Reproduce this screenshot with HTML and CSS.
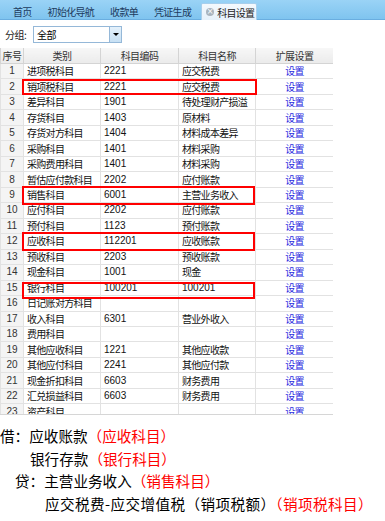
FILE: index.html
```html
<!DOCTYPE html>
<html lang="zh-CN">
<head>
    <meta charset="UTF-8">
    <meta name="viewport" content="width=device-width, initial-scale=1.0">
    <title>科目设置</title>
    <link rel="stylesheet" href="styles.css">
</head>
<body>
    <div class="page">
        <div class="tabs">
            <span class="tab t1">首页</span>
            <span class="tab t2">初始化导航</span>
            <span class="tab t3">收款单</span>
            <span class="tab t4">凭证生成</span>
            <span class="tab active"><i class="tab-close">&times;</i>科目设置</span>
        </div>

        <div class="filter">
            <label>分组:</label>
            <div class="combo">
                <span class="combo-text">全部</span>
                <span class="combo-btn"></span>
            </div>
        </div>

        <div class="grid">
            <table>
                <colgroup>
                    <col class="c-no"><col class="c-type"><col class="c-code"><col class="c-name"><col class="c-set">
                </colgroup>
                <thead>
                    <tr><th>序号</th><th>类别</th><th>科目编码</th><th>科目名称</th><th>扩展设置</th></tr>
                </thead>
                <tbody>
                    <tr><td class="no">1</td><td>进项税科目</td><td class="num">2221</td><td>应交税费</td><td class="set">设置</td></tr>
                    <tr><td class="no">2</td><td>销项税科目</td><td class="num">2221</td><td>应交税费</td><td class="set">设置</td></tr>
                    <tr><td class="no">3</td><td>差异科目</td><td class="num">1901</td><td>待处理财产损溢</td><td class="set">设置</td></tr>
                    <tr><td class="no">4</td><td>存货科目</td><td class="num">1403</td><td>原材料</td><td class="set">设置</td></tr>
                    <tr><td class="no">5</td><td>存货对方科目</td><td class="num">1404</td><td>材料成本差异</td><td class="set">设置</td></tr>
                    <tr><td class="no">6</td><td>采购科目</td><td class="num">1401</td><td>材料采购</td><td class="set">设置</td></tr>
                    <tr><td class="no">7</td><td>采购费用科目</td><td class="num">1401</td><td>材料采购</td><td class="set">设置</td></tr>
                    <tr><td class="no">8</td><td>暂估应付款科目</td><td class="num">2202</td><td>应付账款</td><td class="set">设置</td></tr>
                    <tr><td class="no">9</td><td>销售科目</td><td class="num">6001</td><td>主营业务收入</td><td class="set">设置</td></tr>
                    <tr><td class="no">10</td><td>应付科目</td><td class="num">2202</td><td>应付账款</td><td class="set">设置</td></tr>
                    <tr><td class="no">11</td><td>预付科目</td><td class="num">1123</td><td>预付账款</td><td class="set">设置</td></tr>
                    <tr><td class="no">12</td><td>应收科目</td><td class="num">112201</td><td>应收账款</td><td class="set">设置</td></tr>
                    <tr><td class="no">13</td><td>预收科目</td><td class="num">2203</td><td>预收账款</td><td class="set">设置</td></tr>
                    <tr><td class="no">14</td><td>现金科目</td><td class="num">1001</td><td>现金</td><td class="set">设置</td></tr>
                    <tr><td class="no">15</td><td>银行科目</td><td class="num">100201</td><td class="num">100201</td><td class="set">设置</td></tr>
                    <tr><td class="no">16</td><td>日记账对方科目</td><td></td><td></td><td class="set">设置</td></tr>
                    <tr><td class="no">17</td><td>收入科目</td><td class="num">6301</td><td>营业外收入</td><td class="set">设置</td></tr>
                    <tr><td class="no">18</td><td>费用科目</td><td></td><td></td><td class="set">设置</td></tr>
                    <tr><td class="no">19</td><td>其他应收科目</td><td class="num">1221</td><td>其他应收款</td><td class="set">设置</td></tr>
                    <tr><td class="no">20</td><td>其他应付科目</td><td class="num">2241</td><td>其他应付款</td><td class="set">设置</td></tr>
                    <tr><td class="no">21</td><td>现金折扣科目</td><td class="num">6603</td><td>财务费用</td><td class="set">设置</td></tr>
                    <tr><td class="no">22</td><td>汇兑损益科目</td><td class="num">6603</td><td>财务费用</td><td class="set">设置</td></tr>
                    <tr><td class="no">23</td><td>资产科目</td><td></td><td></td><td class="set">设置</td></tr>
                </tbody>
            </table>
        </div>

        <!-- red marks drawn over the rows -->
        <div class="mark mark-r2"></div>
        <div class="mark mark-r9"></div>
        <div class="mark mark-r12"></div>
        <div class="mark mark-r15"></div>

        <div class="notes">
            <p class="l1">借：应收账款<span class="red">（应收科目）</span></p>
            <p class="l2">银行存款<span class="red">（银行科目）</span></p>
            <p class="l3">贷：主营业务收入<span class="red">（销售科目）</span></p>
            <p class="l4">应交税费-应交增值税（销项税额）<span class="red">（销项税科目）</span></p>
        </div>
    </div>
</body>
</html>
```

FILE: styles.css
```css
body {
    margin: 0;
    background: #fff;
    font-family: "Noto Sans CJK SC", sans-serif;
    color: #000;
}
.page {
    position: relative;
    width: 385px;
    height: 521px;
    overflow: hidden;
}
.tabs {
    height: 19px;
    background: linear-gradient(#9ad3f6, #7fc4ef);
    border-bottom: 1px solid #6aaee0;
    display: flex;
    align-items: flex-end;
    padding-left: 13px;
}
.tab {
    font-size: 10px;
    letter-spacing: -0.7px;
    line-height: 15px;
    height: 15px;
    color: #1d3b5e;
    white-space: nowrap;
}
.t2 { margin-left: 16px; }
.t3 { margin-left: 16px; }
.t4 { margin-left: 16px; }
.tab.active {
    margin-left: 10px;
    width: 50px;
    background: linear-gradient(#f4f9fd, #e6f1fa);
    border: 1px solid #a8cfec;
    border-bottom: none;
    border-radius: 2px 2px 0 0;
    padding: 0 0 0 4px;
    display: flex;
    align-items: center;
    gap: 3px;
    color: #222;
    margin-bottom: -1px;
    height: 16px;
}
.tab-close {
    width: 8px;
    height: 8px;
    border-radius: 50%;
    background: #a9b4be;
    color: #fff;
    font-style: normal;
    font-size: 8px;
    line-height: 8px;
    letter-spacing: 0;
    text-align: center;
    font-family: "DejaVu Sans", sans-serif;
}
.filter {
    height: 28px;
    display: flex;
    align-items: center;
    padding-left: 5px;
    font-size: 10px;
    letter-spacing: -0.5px;
}
.filter label {
    width: 28px;
    color: #222;
}
.combo {
    width: 87px;
    height: 15px;
    border: 1px solid #95b8d8;
    display: flex;
    background: #fff;
    margin-top: 1px;
}
.combo-text {
    flex: 1;
    padding-left: 3px;
    line-height: 15px;
    font-size: 10px;
}
.combo-btn {
    width: 11px;
    background: linear-gradient(#e4f1fb, #c7e0f4);
    border-left: 1px solid #95b8d8;
    position: relative;
}
.combo-btn::after {
    content: "";
    position: absolute;
    left: 3px;
    top: 6px;
    border-left: 3px solid transparent;
    border-right: 3px solid transparent;
    border-top: 3px solid #000;
}
.grid {
    width: 333px;
    height: 367px;
    overflow: hidden;
    border-bottom: 1px solid #d6d6d6;
    box-sizing: border-box;
}
.grid table {
    width: 333px;
    table-layout: fixed;
    border-collapse: collapse;
}
.c-no { width: 23px; }
.c-type { width: 77px; }
.c-code { width: 78px; }
.c-name { width: 77px; }
.c-set { width: 78px; }
th {
    height: 15px;
    padding: 0;
    font-size: 10px;
    letter-spacing: -0.6px;
    font-weight: normal;
    color: #333;
    background: linear-gradient(#f7f7f7, #ebebeb);
    border: 1px solid #d4d4d4;
    border-top: none;
    line-height: 15px;
    text-align: center;
    white-space: nowrap;
}
td {
    height: 14.47px;
    padding: 0 0 0 3px;
    font-size: 10px;
    letter-spacing: -0.7px;
    line-height: 14px;
    border: 1px solid #e2e2e2;
    white-space: nowrap;
    overflow: hidden;
    color: #111;
}
td.no {
    padding: 0;
    text-align: center;
    background: #f4f4f4;
    font-family: "Liberation Sans", sans-serif;
    letter-spacing: 0;
    color: #333;
}
td.num {
    font-family: "Liberation Sans", sans-serif;
    letter-spacing: 0;
}
td.set {
    padding: 0;
    text-align: center;
    color: #2a2ae0;
}
.mark {
    position: absolute;
    border: 2px solid #f00;
    box-sizing: border-box;
}
.mark-r2 { left: 22px; top: 79px; width: 235px; height: 16px; }
.mark-r9 { left: 22px; top: 186px; width: 233px; height: 19px; }
.mark-r12 { left: 22px; top: 232px; width: 233px; height: 19px; }
.mark-r15 { left: 22px; top: 282px; width: 233px; height: 17px; }
.notes {
    padding-top: 10px;
    font-size: 14.6px;
}
.notes p {
    margin: 0;
    line-height: 22.7px;
    white-space: nowrap;
}
.notes .l2 { padding-left: 30px; }
.notes .l3 { padding-left: 15px; }
.notes .l4 { padding-left: 45px; letter-spacing: 0.4px; }
.red { color: #f00; }
```
